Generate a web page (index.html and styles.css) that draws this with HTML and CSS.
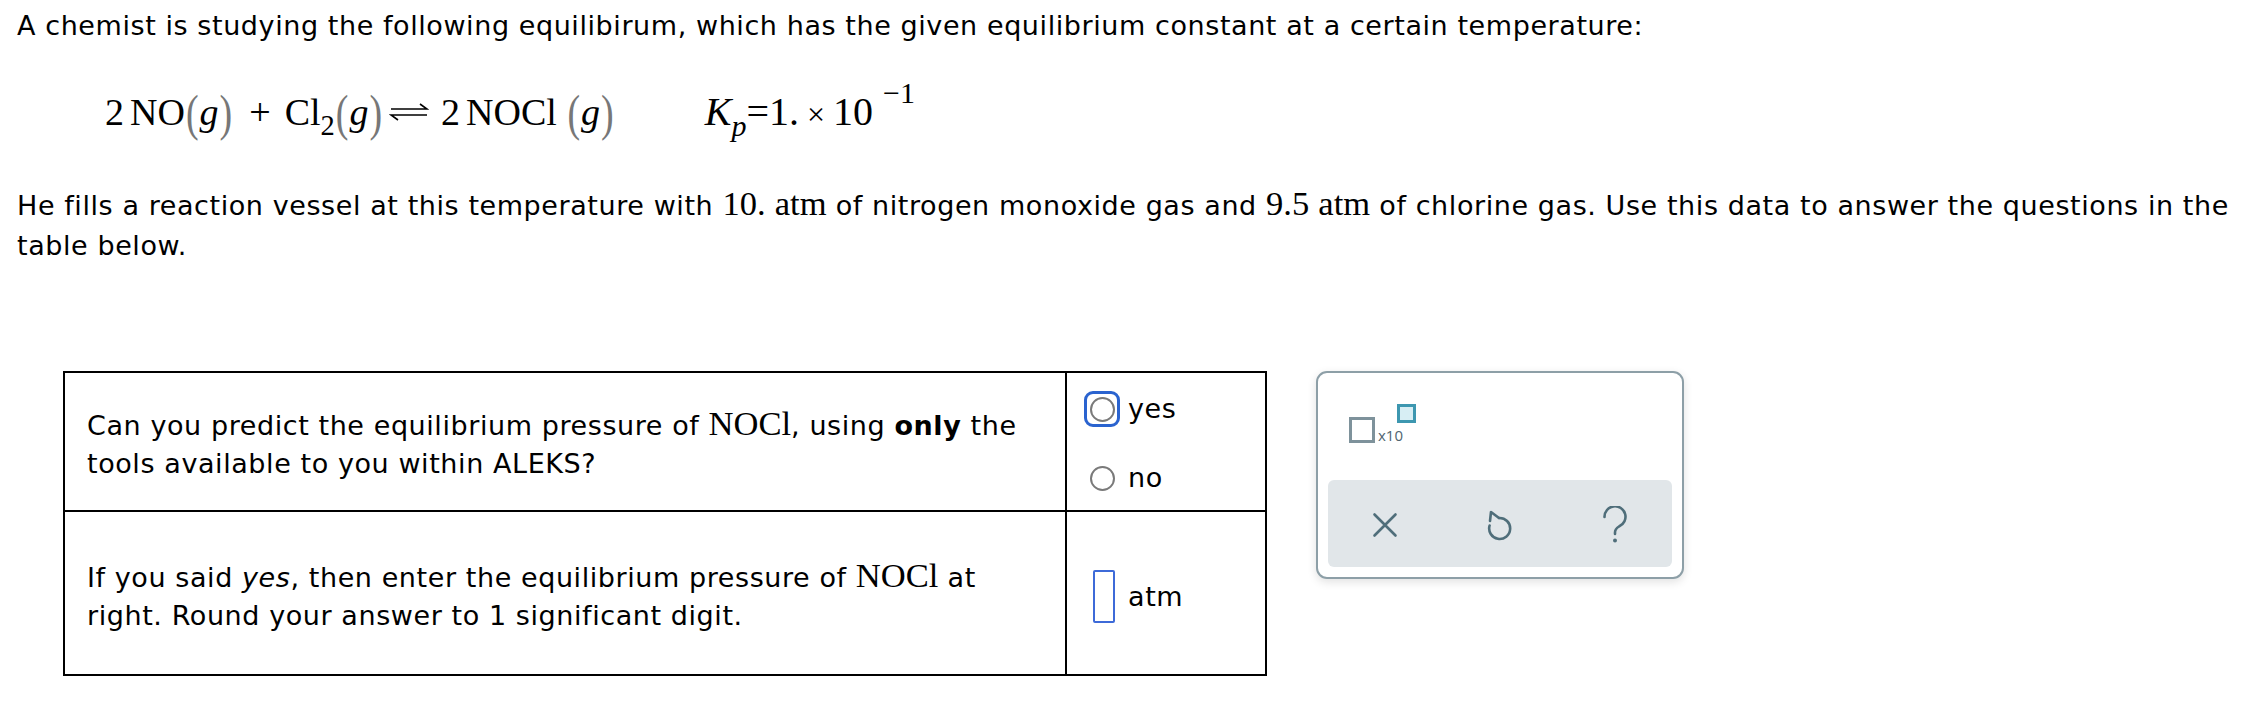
FILE: index.html
```html
<!DOCTYPE html>
<html lang="en">
<head>
<meta charset="utf-8">
<title>Equilibrium question</title>
<link rel="stylesheet" href="styles.css">
</head>
<body>
<div class="page">
  <p class="intro">A chemist is studying the following equilibirum, which has the given equilibrium constant at a certain temperature:</p>

  <div class="eqrow">
    <span class="eq">2<span class="th"></span>NO<span class="pr">(</span><i>g</i><span class="pr">)</span><span class="plus">+</span>Cl<sub class="sb">2</sub><span class="pr">(</span><i>g</i><span class="pr">)</span><svg class="arrow" width="40" height="22" viewBox="0 0 40 22" aria-hidden="true"><path d="M2 8 H38 L31 3" fill="none" stroke="#000" stroke-width="1.6"/><path d="M38 14 H2 L9 19" fill="none" stroke="#000" stroke-width="1.6"/></svg>2<span class="th"></span>NOCl <span class="pr">(</span><i>g</i><span class="pr">)</span></span>
    <span class="kp"><i>K</i><sub class="sb"><i>p</i></sub>=1.<span class="times">×</span>10<sup class="sp">−1</sup></span>
  </div>

  <p class="para">He fills a reaction vessel at this temperature with <span class="m">10.</span> <span class="m">atm</span> of nitrogen monoxide gas and <span class="m">9.5</span> <span class="m">atm</span> of chlorine gas. Use this data to answer the questions in the table below.</p>

  <div class="work">
    <table class="qt">
      <colgroup><col class="c1"><col class="c2"></colgroup>
      <tr class="r1">
        <td class="q q1">Can you predict the equilibrium pressure of <span class="m">NOCl</span>, using <b>only</b> the tools available to you within ALEKS?</td>
        <td class="a a1">
          <div class="opt"><span class="ring focus"><span class="dot"></span></span><span>yes</span></div>
          <div class="opt opt2"><span class="ring"><span class="dot"></span></span><span>no</span></div>
        </td>
      </tr>
      <tr class="r2">
        <td class="q q2">If you said <i>yes</i>, then enter the equilibrium pressure of <span class="m">NOCl</span> at right. Round your answer to 1 significant digit.</td>
        <td class="a a2">
          <div class="entry"><span class="box"></span><span>atm</span></div>
        </td>
      </tr>
    </table>

    <div class="panel">
      <div class="sci">
        <span class="base"></span><span class="x10">x10</span><span class="exp"></span>
      </div>
      <div class="tools">
        <span class="tool">
          <svg width="26" height="26" viewBox="0 0 26 26" aria-hidden="true"><path d="M2.5 2.5 L23.5 23.5 M23.5 2.5 L2.5 23.5" stroke="#4f6e7a" stroke-width="2.6" stroke-linecap="round" fill="none"/></svg>
        </span>
        <span class="tool">
          <svg width="28" height="32" viewBox="0 0 28 32" aria-hidden="true"><path d="M13 9 A10.5 10.5 0 1 1 3.6 16.5" stroke="#4f6e7a" stroke-width="2.6" stroke-linecap="round" fill="none"/><path d="M13 9 L5 3 L4 12" stroke="#4f6e7a" stroke-width="2.6" stroke-linecap="round" stroke-linejoin="round" fill="none"/></svg>
        </span>
        <span class="tool">
          <svg width="26" height="38" viewBox="0 0 26 38" aria-hidden="true"><path d="M2.5 11 A10.5 10.5 0 1 1 17 20.5 C14.5 22 13 23.5 13 26.5 V28" stroke="#4f6e7a" stroke-width="2.6" stroke-linecap="round" fill="none"/><circle cx="13" cy="34.5" r="2" fill="#4f6e7a"/></svg>
        </span>
      </div>
    </div>
  </div>
</div>
</body>
</html>
```

FILE: styles.css
```css
* { box-sizing: border-box; }
html, body { margin: 0; padding: 0; background: #fff; }
body {
  font-family: "DejaVu Sans", Verdana, sans-serif;
  font-size: 27px;
  letter-spacing: 0.58px;
  color: #000;
  width: 2260px;
}
.page { padding: 6px 6px 0 17px; }

.intro { margin: 0; line-height: 40px; }

.eqrow {
  display: flex;
  align-items: baseline;
  gap: 90px;
  margin-top: 36px;
  padding-left: 88px;
  height: 60px;
  line-height: 60px;
  font-family: "Liberation Serif", "Times New Roman", serif;
  font-size: 38px;
  letter-spacing: 0;
}
.eq, .kp { white-space: nowrap; }
.th { display: inline-block; width: 6px; }
.pr {
  display: inline-block;
  color: #777;
  transform: scaleY(1.35);
  margin: 0 1px;
}
.plus { margin: 0 14px 0 16px; }
.sb { font-size: 0.75em; vertical-align: -0.35em; line-height: 0; }
.sp { font-size: 0.75em; vertical-align: 0.75em; line-height: 0; margin-left: 10px; }
.arrow { margin: 0 12px 0 6px; vertical-align: 2px; }
.kp { font-size: 40px; }
.times { margin: 0 8px; font-size: 0.8em; }

.para { margin: 44px 0 0; line-height: 40px; }
.m { font-family: "Liberation Serif", "Times New Roman", serif; font-size: 1.28em; line-height: 1; letter-spacing: 0; }

.work {
  display: flex;
  align-items: flex-start;
  gap: 49px;
  margin-top: 105px;
  padding-left: 46px;
}

.qt {
  border-collapse: collapse;
  table-layout: fixed;
  width: 1202px;
  border: 2px solid #000;
}
.c1 { width: 1002px; }
.c2 { width: 200px; }
.qt td { border: 2px solid #000; padding: 0; }
.r1 { height: 139px; }
.r2 { height: 164px; }
.q { padding: 6px 22px 0 !important; vertical-align: middle; line-height: 38px; }
.a1 { vertical-align: top; padding: 18px 0 0 17px !important; }
.a2 { vertical-align: middle; padding: 6px 0 0 26px !important; }

.opt { display: flex; align-items: center; gap: 8px; height: 36px; line-height: 36px; }
.opt2 { margin-top: 33px; }
.ring {
  width: 36px; height: 36px;
  display: flex; align-items: center; justify-content: center;
  border: 3px solid transparent;
  border-radius: 9px;
}
.ring.focus { border-color: #2a63cf; }
.dot {
  width: 25px; height: 25px;
  border: 2px solid #7a7a7a;
  border-radius: 50%;
  background: #fff;
}

.entry { display: flex; align-items: center; gap: 13px; }
.box {
  width: 22px; height: 53px;
  border: 2px solid #3d6ad8;
  border-radius: 2px;
}

.panel {
  width: 368px;
  height: 208px;
  border: 2px solid #8d9fa7;
  border-radius: 11px;
  background: #fff;
  box-shadow: 0 3px 10px rgba(0, 0, 0, 0.12);
  display: flex;
  flex-direction: column;
  justify-content: space-between;
  letter-spacing: 0;
}
.sci { display: flex; align-items: flex-start; margin: 31px 0 0 31px; }
.base {
  width: 26px; height: 26px;
  margin-top: 13px;
  border: 3px solid #7e929b;
}
.x10 {
  font-family: "Open Sans", "Noto Sans", sans-serif;
  font-size: 15px;
  line-height: 18px;
  margin-top: 22px;
  margin-left: 3px;
  color: #4f6470;
}
.exp {
  width: 19px; height: 19px;
  margin-left: -6px;
  border: 3px solid #3d97b0;
  background: #d7eef4;
}
.tools {
  display: flex;
  height: 87px;
  margin: 0 10px 10px;
  background: #e1e6e9;
  border-radius: 6px;
}
.tool { flex: 1; display: flex; align-items: center; justify-content: center; padding-top: 2px; }
```
